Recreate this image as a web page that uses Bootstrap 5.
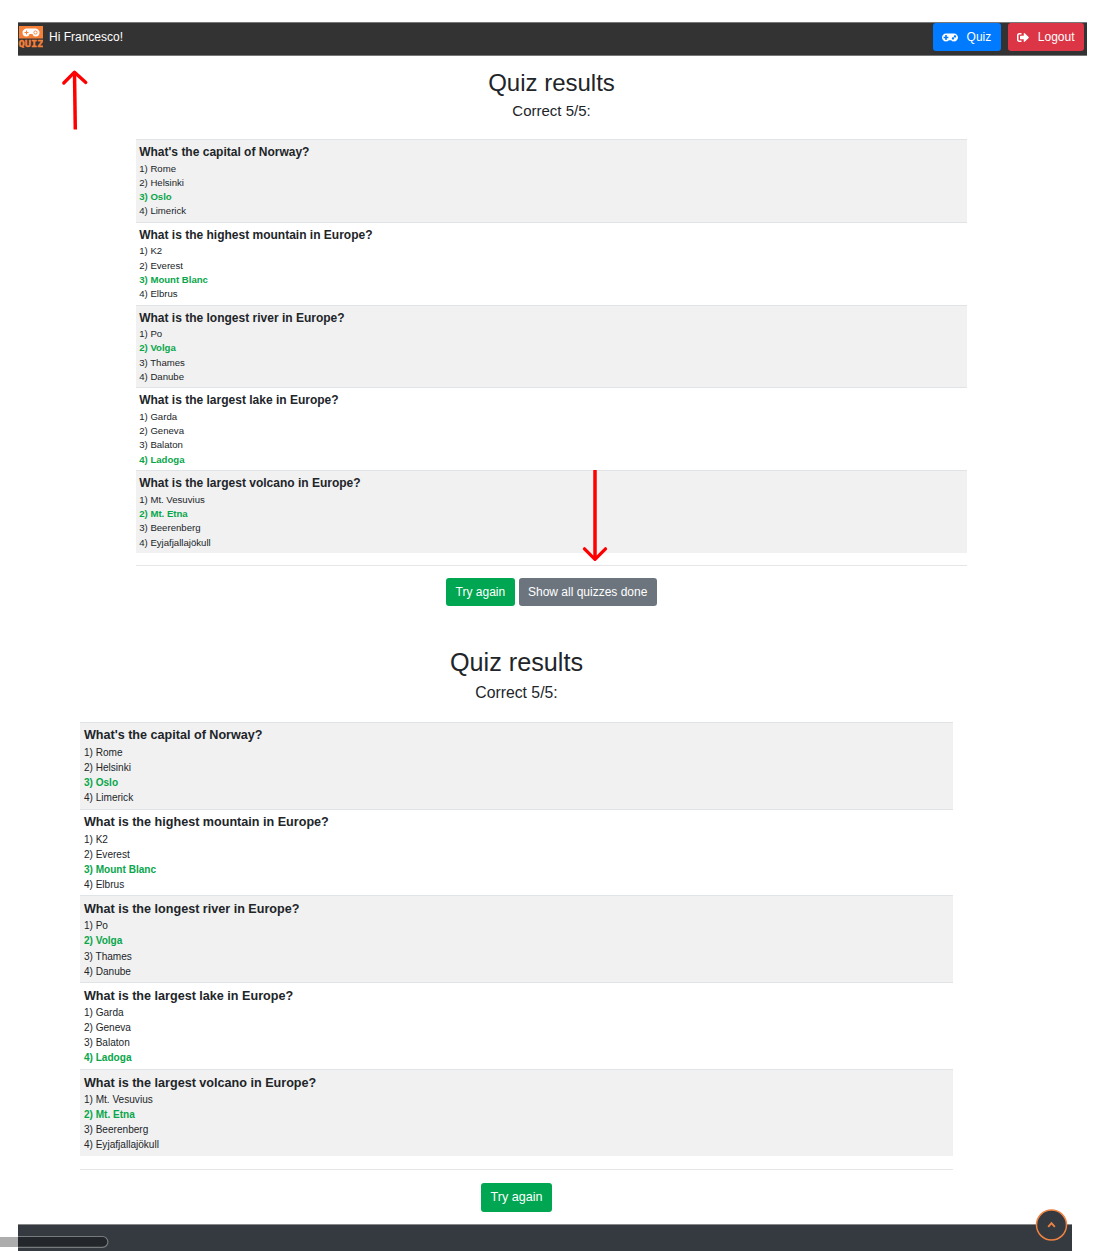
<!DOCTYPE html>
<html lang="en">
<head>
<meta charset="utf-8">
<meta name="viewport" content="width=device-width, initial-scale=1">
<title>Quiz results</title>
<link href="https://cdn.jsdelivr.net/npm/bootstrap@5.3.0/dist/css/bootstrap.min.css" rel="stylesheet">
<style>
body{font-family:"Liberation Sans",Arial,sans-serif;color:#212529;background:#fff;height:1251px;position:relative;overflow:hidden}
.topbar{margin:22px 9px 0 18px;height:34px;padding:0;background:#333;border:1px solid #777;border-width:1px 0;flex-wrap:nowrap}
.brand-logo{width:25px;height:24px;margin:0 6px 6px 0}
.greeting{font-size:12px;line-height:18px;color:#fff;margin-bottom:5px}
.top-actions{gap:7px;margin-right:3px}
.topbar .btn{height:28px;font-size:12px;line-height:18px;padding:0 9.500px 0 9px;border:0;border-radius:3px;display:flex;align-items:center;color:#fff;margin-bottom:4px}
.topbar .btn svg{margin-right:9px}
.btn-blue,.btn-blue:hover{background:#007bff}
.btn-red,.btn-red:hover{background:#dc3545}
/* --k scales every measure of a results panel */
.results{--k:1;width:831px;margin-left:136px;padding-top:12px}
.results-large{--k:1.0505;width:873px;margin-left:80px;padding-top:41.500px}
.results h1{font-size:calc(24px*var(--k));line-height:calc(30px*var(--k));margin:0 0 calc(3px*var(--k));font-weight:400}
.results h2{font-size:calc(15px*var(--k));line-height:calc(20px*var(--k));margin:0 0 calc(18px*var(--k));font-weight:400}
.results-large h2{margin-bottom:18.400px}
.question{height:calc(82.800px*var(--k));border-top:1px solid #e1e4e6;padding:calc(4px*var(--k)) calc(3.200px*var(--k)) 0;font-size:calc(9.600px*var(--k));line-height:calc(14.300px*var(--k))}
.question:nth-child(odd){background:#f1f1f1}
.question h3{font-size:calc(12px*var(--k));line-height:calc(17.500px*var(--k));margin:0;font-weight:700}
.results-large .question{padding:3.300px 3.900px 0}
.results-large h3{margin-bottom:.3px}
.answer-right{color:#09a64b;font-weight:700}
.rule{border-top:1px solid #e6e6e6;margin-top:calc(12px*var(--k));padding-top:calc(12px*var(--k));gap:4px}
.rule .btn{height:calc(28px*var(--k));padding:0 calc(9.400px*var(--k));font-size:calc(12px*var(--k));line-height:calc(28px*var(--k));border:0;border-radius:3px;color:#fff}
.btn-green,.btn-green:hover{background:#00a651}
.btn-grey,.btn-grey:hover{background:#6c757d}
.page-foot{margin:12.500px 24px 0 18px;height:27px;background:#343a40;border-top:1px solid #888}
.overlay{position:absolute;left:0;top:0;width:1096px;height:1251px;pointer-events:none}
</style>
<script src="https://cdn.jsdelivr.net/npm/bootstrap@5.3.0/dist/js/bootstrap.bundle.min.js"></script>
</head>
<body>
<svg class="d-none">
<symbol id="pad" viewBox="0 0 640 512"><path fill="currentColor" d="M480 96H160C71.600 96 0 167.600 0 256s71.600 160 160 160c44.800 0 85.200-18.400 114.200-48h91.500c29 29.600 69.500 48 114.200 48 88.400 0 160-71.600 160-160S568.400 96 480 96zM256 276c0 6.600-5.400 12-12 12h-52v52c0 6.600-5.400 12-12 12h-40c-6.600 0-12-5.400-12-12v-52H76c-6.600 0-12-5.400-12-12v-40c0-6.600 5.400-12 12-12h52v-52c0-6.600 5.400-12 12-12h40c6.600 0 12 5.400 12 12v52h52c6.600 0 12 5.400 12 12v40zm184 68c-26.500 0-48-21.500-48-48s21.500-48 48-48 48 21.500 48 48-21.500 48-48 48zm80-80c-26.500 0-48-21.500-48-48s21.500-48 48-48 48 21.500 48 48-21.500 48-48 48z"/></symbol>
</svg>
<nav class="topbar navbar d-flex justify-content-between align-items-center">
<div class="d-flex align-items-center">
<svg class="brand-logo" viewBox="0 0 25 24"><rect x="1" y="2" width="24" height="12.500" fill="#f5803a"/><path d="M9 4.500h8c2 0 4.500 1.500 4.500 4a4 4 0 0 1-4 4c-1.500 0-2.500-.8-3-2.500h-3c-.5 1.700-1.500 2.500-3 2.500a4 4 0 0 1-4-4c0-2.500 2.500-4 4.500-4z" fill="#fff"/><path d="M6.500 8.500h4M8.500 6.500v4" stroke="#f5803a" stroke-width="1"/><circle cx="17.500" cy="8.500" r="1.600" fill="none" stroke="#f5803a" stroke-width=".9"/><text x="0.500" y="22.500" font-family="DejaVu Sans Mono" font-weight="700" font-size="8.800" textLength="25" lengthAdjust="spacingAndGlyphs" fill="#f5803a" stroke="#f5803a" stroke-width=".35">QUIZ</text></svg>
<span class="greeting">Hi Francesco!</span>
</div>
<div class="d-flex top-actions">
<a class="btn btn-blue" href="#"><svg width="16" height="13"><use href="#pad"/></svg>Quiz</a>
<a class="btn btn-red" href="#"><svg width="12" height="13" viewBox="0 0 512 512"><path fill="currentColor" d="M497 273L329 441c-15 15-41 4.500-41-17v-96H152c-13.300 0-24-10.700-24-24v-96c0-13.300 10.700-24 24-24h136V88c0-21.400 25.900-32 41-17l168 168c9.300 9.400 9.300 24.600 0 34zM192 436v-40c0-6.600-5.400-12-12-12H96c-17.700 0-32-14.300-32-32V160c0-17.700 14.300-32 32-32h84c6.600 0 12-5.400 12-12V76c0-6.600-5.400-12-12-12H96c-53 0-96 43-96 96v192c0 53 43 96 96 96h84c6.600 0 12-5.400 12-12z"/></svg>Logout</a>
</div>
</nav>
<section class="results">
<h1 class="text-center">Quiz results</h1>
<h2 class="text-center">Correct 5/5:</h2>
<div>
<div class="question"><h3>What's the capital of Norway?</h3><div>1) Rome</div><div>2) Helsinki</div><div class="answer-right">3) Oslo</div><div>4) Limerick</div></div>
<div class="question"><h3>What is the highest mountain in Europe?</h3><div>1) K2</div><div>2) Everest</div><div class="answer-right">3) Mount Blanc</div><div>4) Elbrus</div></div>
<div class="question"><h3>What is the longest river in Europe?</h3><div>1) Po</div><div class="answer-right">2) Volga</div><div>3) Thames</div><div>4) Danube</div></div>
<div class="question"><h3>What is the largest lake in Europe?</h3><div>1) Garda</div><div>2) Geneva</div><div>3) Balaton</div><div class="answer-right">4) Ladoga</div></div>
<div class="question"><h3>What is the largest volcano in Europe?</h3><div>1) Mt. Vesuvius</div><div class="answer-right">2) Mt. Etna</div><div>3) Beerenberg</div><div>4) Eyjafjallajökull</div></div>
</div>
<div class="rule d-flex justify-content-center"><a class="btn btn-green" href="#">Try again</a><a class="btn btn-grey" href="#">Show all quizzes done</a></div>
</section>
<section class="results results-large">
<h1 class="text-center">Quiz results</h1>
<h2 class="text-center">Correct 5/5:</h2>
<div>
<div class="question"><h3>What's the capital of Norway?</h3><div>1) Rome</div><div>2) Helsinki</div><div class="answer-right">3) Oslo</div><div>4) Limerick</div></div>
<div class="question"><h3>What is the highest mountain in Europe?</h3><div>1) K2</div><div>2) Everest</div><div class="answer-right">3) Mount Blanc</div><div>4) Elbrus</div></div>
<div class="question"><h3>What is the longest river in Europe?</h3><div>1) Po</div><div class="answer-right">2) Volga</div><div>3) Thames</div><div>4) Danube</div></div>
<div class="question"><h3>What is the largest lake in Europe?</h3><div>1) Garda</div><div>2) Geneva</div><div>3) Balaton</div><div class="answer-right">4) Ladoga</div></div>
<div class="question"><h3>What is the largest volcano in Europe?</h3><div>1) Mt. Vesuvius</div><div class="answer-right">2) Mt. Etna</div><div>3) Beerenberg</div><div>4) Eyjafjallajökull</div></div>
</div>
<div class="rule d-flex justify-content-center"><a class="btn btn-green" href="#">Try again</a></div>
</section>
<footer class="page-foot"></footer>
<!-- annotation arrows, scroll indicator and back-to-top button -->
<svg class="overlay" viewBox="0 0 1096 1251" fill="none">
<g stroke="#f00" stroke-width="3.500"><path d="M75.300 129.500L74.500 72"/><path d="M63.800 83L74.500 72.200l11.300 10.300" stroke-linecap="round" stroke-linejoin="round" stroke-width="3.300"/><path d="M595 470v89"/><path d="M584.500 548.800l10.500 10.500 10.500-10.500" stroke-linecap="round" stroke-linejoin="round" stroke-width="3.300"/></g>
<path d="M0 1237h103a5 5 0 0 1 0 10H0z" fill="#000" fill-opacity=".32"/>
<path d="M18 1236.500h84.500a5.200 5.200 0 0 1 0 10.800H18" stroke="#777b7e" stroke-width="1.200"/>
<circle cx="1051.500" cy="1225" r="15" fill="#343a40" stroke="#ee8240" stroke-width="1.500"/>
<path d="M1048.200 1226.800l3.300-3.600 3.300 3.600" stroke="#ee8240" stroke-width="1.900"/>
</svg>
</body>
</html>
